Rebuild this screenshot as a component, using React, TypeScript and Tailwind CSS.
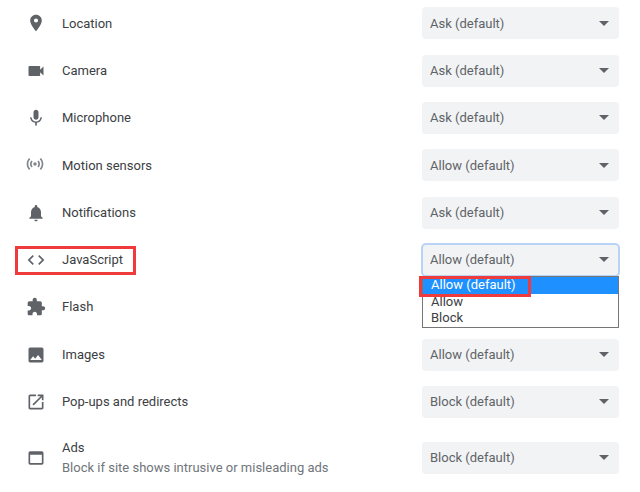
const icons = {
  location: 'M12 2C8.13 2 5 5.13 5 9c0 5.25 7 13 7 13s7-7.75 7-13c0-3.87-3.13-7-7-7zm0 9.5a2.5 2.5 0 0 1 0-5 2.5 2.5 0 0 1 0 5z',
  camera: 'M17 10.5V7c0-.55-.45-1-1-1H4c-.55 0-1 .45-1 1v10c0 .55.45 1 1 1h12c.55 0 1-.45 1-1v-3.5l4 4v-11l-4 4z',
  mic: 'M12 14c1.66 0 2.99-1.34 2.99-3L15 5c0-1.66-1.34-3-3-3S9 3.34 9 5v6c0 1.66 1.34 3 3 3zm5.3-3c0 3-2.54 5.1-5.3 5.1S6.7 14 6.7 11H5c0 3.41 2.72 6.23 6 6.72V21h2v-3.28c3.28-.48 6-3.3 6-6.72h-1.7z',
  sensors: 'M7.76 16.24C6.67 15.16 6 13.66 6 12s.67-3.16 1.76-4.24l1.42 1.42C8.45 9.9 8 10.9 8 12c0 1.1.45 2.1 1.17 2.83l-1.41 1.41zm8.48 0C17.33 15.16 18 13.66 18 12s-.67-3.16-1.76-4.24l-1.42 1.42C15.55 9.9 16 10.9 16 12c0 1.1-.45 2.1-1.17 2.83l1.41 1.41zM12 10c-1.1 0-2 .9-2 2s.9 2 2 2 2-.9 2-2-.9-2-2-2zm8 2c0 2.21-.9 4.21-2.35 5.65l1.42 1.42C20.88 17.26 22 14.76 22 12s-1.12-5.26-2.93-7.07l-1.42 1.42C19.1 7.79 20 9.79 20 12zM6.35 6.35L4.93 4.93C3.12 6.74 2 9.24 2 12s1.12 5.26 2.93 7.07l1.42-1.42C4.9 16.21 4 14.21 4 12s.9-4.21 2.35-5.65z',
  bell: 'M12 22c1.1 0 2-.9 2-2h-4c0 1.1.9 2 2 2zm6-6v-5c0-3.07-1.63-5.64-4.5-6.32V4c0-.83-.67-1.5-1.5-1.5s-1.5.67-1.5 1.5v.68C7.64 5.36 6 7.92 6 11v5l-2 2v1h16v-1l-2-2z',
  code: 'M9.4 16.6L4.8 12l4.6-4.6L8 6l-6 6 6 6 1.4-1.4zm5.2 0l4.6-4.6-4.6-4.6L16 6l6 6-6 6-1.4-1.4z',
  puzzle: 'M20.5 11H19V7c0-1.1-.9-2-2-2h-4V3.5C13 2.12 11.88 1 10.5 1S8 2.12 8 3.5V5H4c-1.1 0-1.99.9-1.99 2v3.8H3.5c1.49 0 2.7 1.21 2.7 2.7s-1.21 2.7-2.7 2.7H2V20c0 1.1.9 2 2 2h3.8v-1.5c0-1.49 1.21-2.7 2.7-2.7 1.49 0 2.7 1.21 2.7 2.7V22H17c1.1 0 2-.9 2-2v-4h1.5c1.38 0 2.5-1.12 2.5-2.5S21.88 11 20.5 11z',
  image: 'M21 19V5c0-1.1-.9-2-2-2H5c-1.1 0-2 .9-2 2v14c0 1.1.9 2 2 2h14c1.1 0 2-.9 2-2zM8.5 13.5l2.5 3.01L14.5 12l4.5 6H5l3.5-4.5z',
  open: 'M19 19H5V5h7V3H5c-1.11 0-2 .9-2 2v14c0 1.1.89 2 2 2h14c1.1 0 2-.9 2-2v-7h-2v7zM14 3v2h3.59l-9.83 9.83 1.41 1.41L19 6.41V10h2V3h-7z',
  ads: 'M19 4H5c-1.11 0-2 .9-2 2v12c0 1.1.89 2 2 2h14c1.1 0 2-.9 2-2V6c0-1.1-.89-2-2-2zm0 14H5V8h14v10z',
};

const rows = [
  { icon: icons.location, label: 'Location', value: 'Ask (default)' },
  { icon: icons.camera, label: 'Camera', value: 'Ask (default)' },
  { icon: icons.mic, label: 'Microphone', value: 'Ask (default)' },
  { icon: icons.sensors, label: 'Motion sensors', value: 'Allow (default)', small: true },
  { icon: icons.bell, label: 'Notifications', value: 'Ask (default)' },
  { icon: icons.code, label: 'JavaScript', value: 'Allow (default)', open: true },
  { icon: icons.puzzle, label: 'Flash', value: '' },
  { icon: icons.image, label: 'Images', value: 'Allow (default)' },
  { icon: icons.open, label: 'Pop-ups and redirects', value: 'Block (default)' },
];

function Icon({ d, small }: { d: string; small?: boolean }) {
  return (
    <svg viewBox="0 0 24 24" className={small ? 'w-5 h-5 -ml-[3px] -mt-[2px] fill-[#80868b]' : 'w-5 h-5 fill-[#5f6368]'}>
      <path d={d} />
    </svg>
  );
}

function Select({ value, focused }: { value: string; focused?: boolean }) {
  return (
    <div
      className={`w-[197px] h-8 rounded bg-[#f1f3f4] flex items-center justify-between pl-2 pr-[10px] text-[13px] text-[#5f6368] ${
        focused ? 'outline outline-2 -outline-offset-1 outline-[#b9d3f6]' : ''
      }`}
    >
      <span>{value}</span>
      <span className="w-0 h-0 border-x-[5px] border-x-transparent border-t-[5px] border-t-[#5f6368]" />
    </div>
  );
}

export default function App() {
  return (
    <div className="w-[640px] h-[492px] overflow-hidden bg-white relative font-['Roboto',sans-serif] text-[13px] text-[#3c4043]">
      <div className="-mt-[0.4px] flex flex-col">
        {rows.map((row) => (
          <div key={row.label} className="h-[47.33px] flex items-center pl-[26px]">
            <div className="w-5 flex justify-center">
              <Icon d={row.icon} small={row.small} />
            </div>
            <span className="ml-4 flex-1">{row.label}</span>
            {row.value ? (
              <div className="mr-[21px] relative">
                <Select value={row.value} focused={row.open} />
                {row.open && (
                  <div className="absolute left-0 top-[32px] w-[197px] z-10 border border-[#767676] bg-white text-[13px] leading-4 text-[#3c4043]">
                    <div className="h-[17px] bg-[#1e90ff] text-white pl-2">Allow (default)</div>
                    <div className="pl-2">Allow</div>
                    <div className="pl-2 pb-px">Block</div>
                  </div>
                )}
              </div>
            ) : null}
          </div>
        ))}
        <div className="h-[64px] flex items-center pl-[26px]">
          <div className="w-5 flex justify-center">
            <Icon d={icons.ads} />
          </div>
          <div className="ml-4 flex-1 leading-5">
            <div>Ads</div>
            <div className="text-[#70757a]">Block if site shows intrusive or misleading ads</div>
          </div>
          <div className="mr-[21px]">
            <Select value="Block (default)" />
          </div>
        </div>
      </div>
      {/* red annotation boxes */}
      <div className="absolute left-[15px] top-[246px] w-[121px] h-[29px] border-[3px] border-[#ef3b3b]" />
      <div className="absolute left-[419px] top-[276px] w-[112px] h-[21px] border-[3px] border-[#ef3b3b] z-20" />
    </div>
  );
}
